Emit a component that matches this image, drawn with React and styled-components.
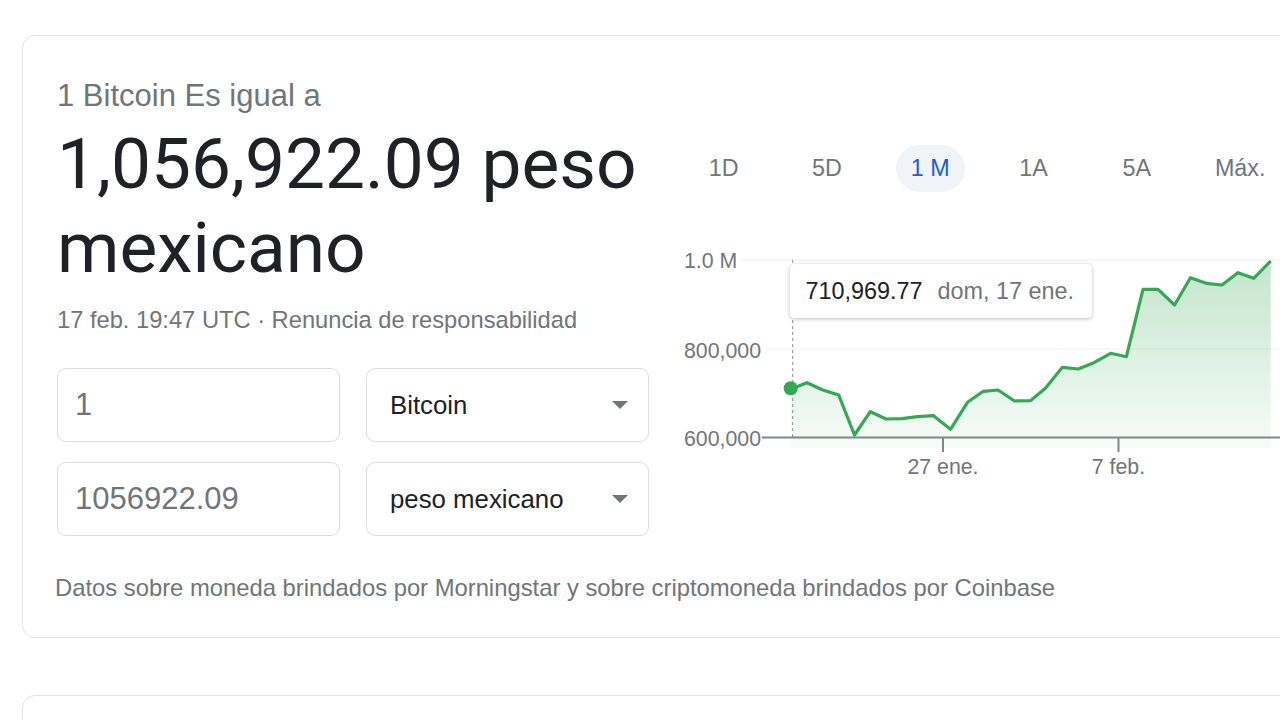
import React from "react";
import styled, { createGlobalStyle } from "styled-components";

const Global = createGlobalStyle`
  html, body { margin: 0; padding: 0; background: #fff; overflow: hidden; }
  body { font-family: "Liberation Sans", Arial, sans-serif; }
`;

const Page = styled.div`
  padding: 35px 0 0 22px;
  width: 1400px;
`;

const Card = styled.section`
  width: 1300px;
  box-sizing: border-box;
  border: 1px solid #e2e3e5;
  border-radius: 13px;
  padding: ${(p) => (p.$empty ? "0" : "42px 0 35px 34px")};
  height: ${(p) => (p.$empty ? "120px" : "auto")};
  margin-top: ${(p) => (p.$empty ? "57px" : "0")};
  background: #fff;
`;

const Main = styled.div`
  display: grid;
  grid-template-columns: 592px 620px;
  column-gap: 23px;
`;

const LeftCol = styled.div`
  display: flex;
  flex-direction: column;
`;

const Title = styled.div`
  font-size: 31px;
  line-height: 36px;
  color: #70757a;
`;

const Big = styled.div`
  margin-top: 8px;
  font-family: Roboto, "Liberation Sans", Arial, sans-serif;
  font-size: 71.2px;
  line-height: 84px;
  color: #202124;
  white-space: nowrap;
`;

const Stamp = styled.div`
  margin-top: 16px;
  font-size: 23.7px;
  line-height: 28px;
  color: #70757a;
  white-space: nowrap;
`;

const Converter = styled.div`
  margin-top: 34px;
  display: grid;
  grid-template-columns: 283px 283px;
  column-gap: 26px;
  row-gap: 20px;
`;

const Box = styled.div`
  box-sizing: border-box;
  height: 74px;
  border: 1px solid #dadce0;
  border-radius: 9px;
  display: flex;
  align-items: center;
  justify-content: space-between;
  padding: ${(p) => (p.$select ? "0 20px 0 23px" : "0 17px")};
  font-size: ${(p) => (p.$select ? "25.8px" : "31px")};
  color: ${(p) => (p.$select ? "#202124" : "#70757a")};
`;

const Caret = styled.span`
  width: 0;
  height: 0;
  border-left: 8px solid transparent;
  border-right: 8px solid transparent;
  border-top: 8px solid #70757a;
`;

const Footer = styled.div`
  margin-top: 38px;
  margin-left: -2px;
  font-size: 23.8px;
  line-height: 28px;
  color: #70757a;
  white-space: nowrap;
`;

const RightCol = styled.div`
  display: flex;
  flex-direction: column;
`;

const Tabs = styled.div`
  margin-top: 67px;
  display: flex;
  height: 47px;
`;

const Tab = styled.div`
  width: 103.3px;
  display: flex;
  justify-content: center;
  align-items: center;
`;

const TabLabel = styled.span`
  height: 47px;
  display: flex;
  align-items: center;
  padding: 0 15px;
  border-radius: 24px;
  font-size: 23.3px;
  color: ${(p) => (p.$active ? "#1a5fd6" : "#70757a")};
  background: ${(p) => (p.$active ? "#f0f3f8" : "transparent")};
`;

const ChartWrap = styled.div`
  position: relative;
  margin-top: 48px;
  width: 620px;
  height: 250px;
`;

const ChartSvg = styled.svg`
  display: block;
  overflow: visible;
`;

const AxisText = styled.text`
  font-family: "Liberation Sans", Arial, sans-serif;
  font-size: 21.3px;
  fill: #70757a;
`;

const Tooltip = styled.div`
  position: absolute;
  left: 117.5px;
  top: 24px;
  width: 302px;
  height: 54px;
  box-sizing: border-box;
  background: #fff;
  border-radius: 4px;
  box-shadow: 0 1px 4px rgba(60, 64, 67, 0.3), 0 0 1px rgba(60, 64, 67, 0.2);
  display: flex;
  align-items: center;
  gap: 15px;
  padding: 0 16px;
  font-size: 23.4px;
  white-space: nowrap;
`;

const TipValue = styled.span`
  color: #202124;
`;

const TipDate = styled.span`
  color: #70757a;
`;

const points = [
  [119.2, 149], [135, 142.7], [150.8, 150], [166.7, 155], [182.5, 195],
  [198.3, 171.7], [214.1, 179], [229.9, 178.7], [245.7, 176.7], [261.5, 175.7],
  [278.5, 189.3], [295.5, 162.3], [311.3, 151.3], [326, 150], [342.5, 161],
  [358.4, 160.7], [373.4, 148.3], [390.4, 127.3], [406.2, 129], [422, 122.7],
  [438.6, 113.3], [454.4, 116.7], [471, 49.3], [486, 49.3], [502.6, 65],
  [518.4, 37.7], [534.2, 43.3], [550, 45], [565.9, 32.7], [581.7, 38.3],
  [598.7, 21],
];

function Chart() {
  const line = points.map((p, i) => `${i ? "L" : "M"}${p[0]} ${p[1]}`).join(" ");
  const first = points[0];
  const last = points[points.length - 1];
  const area = `${line} L${last[0]} 208 L${first[0]} 208 Z`;
  return (
    <ChartSvg width="620" height="250" viewBox="0 0 620 250">
      <defs>
        <linearGradient id="fillg" x1="0" y1="20" x2="0" y2="208" gradientUnits="userSpaceOnUse">
          <stop offset="0" stopColor="#34a853" stopOpacity="0.3" />
          <stop offset="1" stopColor="#34a853" stopOpacity="0.04" />
        </linearGradient>
      </defs>
      <line x1="68" y1="20" x2="620" y2="20" stroke="#ececec" strokeWidth="1" />
      <line x1="93" y1="109" x2="620" y2="109" stroke="#f0f0f0" strokeWidth="1" />
      <path d={area} fill="url(#fillg)" />
      <line x1="120.7" y1="20" x2="120.7" y2="197" stroke="#8a8f94" strokeWidth="1" strokeDasharray="3 3" />
      <line x1="90" y1="197.5" x2="620" y2="197.5" stroke="#80868b" strokeWidth="2" />
      <line x1="271" y1="197" x2="271" y2="212" stroke="#80868b" strokeWidth="2" />
      <line x1="446.5" y1="197" x2="446.5" y2="212" stroke="#80868b" strokeWidth="2" />
      <path d={line} fill="none" stroke="#34a853" strokeWidth="3.2" strokeLinejoin="round" />
      <circle cx="118.7" cy="148.3" r="7" fill="#34a853" />
      <AxisText x="12" y="28">1.0 M</AxisText>
      <AxisText x="12" y="118">800,000</AxisText>
      <AxisText x="12" y="206">600,000</AxisText>
      <AxisText x="271" y="234" textAnchor="middle">27 ene.</AxisText>
      <AxisText x="446.5" y="234" textAnchor="middle">7 feb.</AxisText>
    </ChartSvg>
  );
}

const tabs = ["1D", "5D", "1 M", "1A", "5A", "Máx."];

export default function App() {
  return (
    <>
      <Global />
      <Page>
        <Card>
          <Main>
            <LeftCol>
              <Title>1 Bitcoin Es igual a</Title>
              <Big>
                1,056,922.09 peso
                <br />
                mexicano
              </Big>
              <Stamp>17 feb. 19:47 UTC · Renuncia de responsabilidad</Stamp>
              <Converter>
                <Box>1</Box>
                <Box $select>
                  Bitcoin
                  <Caret />
                </Box>
                <Box>1056922.09</Box>
                <Box $select>
                  peso mexicano
                  <Caret />
                </Box>
              </Converter>
            </LeftCol>
            <RightCol>
              <Tabs>
                {tabs.map((t) => (
                  <Tab key={t}>
                    <TabLabel $active={t === "1 M"}>{t}</TabLabel>
                  </Tab>
                ))}
              </Tabs>
              <ChartWrap>
                <Chart />
                <Tooltip>
                  <TipValue>710,969.77</TipValue>
                  <TipDate>dom, 17 ene.</TipDate>
                </Tooltip>
              </ChartWrap>
            </RightCol>
          </Main>
          <Footer>
            Datos sobre moneda brindados por Morningstar y sobre criptomoneda brindados por Coinbase
          </Footer>
        </Card>
        <Card $empty />
      </Page>
    </>
  );
}
